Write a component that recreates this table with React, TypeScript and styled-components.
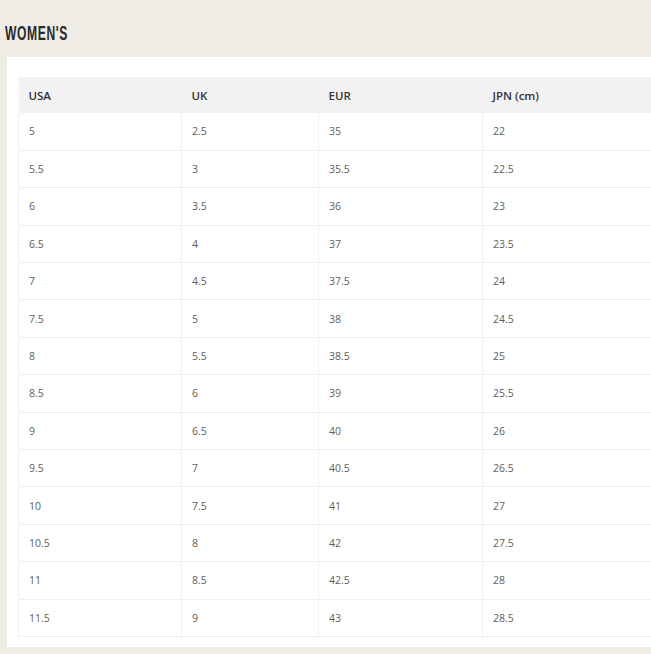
import styled, { createGlobalStyle } from 'styled-components';

const GlobalStyle = createGlobalStyle`
  html, body {
    margin: 0;
    padding: 0;
    background: #efece6;
    overflow: hidden;
  }
`;

const Page = styled.div`
  width: 651px;
  height: 654px;
  background: #efece6;
  overflow: hidden;
`;

const TitleBar = styled.div`
  height: 57px;
  padding: 0 0 0 5px;
  box-sizing: border-box;
  display: flex;
  align-items: flex-start;
`;

const Title = styled.h2`
  margin: 24px 0 0 0;
  display: inline-block;
  font-family: "Liberation Sans", Arial, sans-serif;
  font-weight: 700;
  font-size: 19.5px;
  line-height: 19px;
  color: #2a2a2a;
  transform: scaleX(0.62);
  transform-origin: left top;
  letter-spacing: 1px;
`;

const Panel = styled.div`
  margin-left: 7px;
  width: 720px;
  background: #fff;
  padding: 20px 0 10px 11px;
`;

const Table = styled.table`
  border-collapse: collapse;
  table-layout: fixed;
  width: 680px;
  font-family: "Open Sans", "Noto Sans", sans-serif;
`;

const HeadCell = styled.th<{ $w: number }>`
  width: ${p => p.$w}px;
  height: 36px;
  padding: 0 0 0 10px;
  background: #f2f2f2;
  text-align: left;
  font-size: 11.5px;
  font-weight: 600;
  color: #333;
`;

const Row = styled.tr`
  height: 37.4px;
  border-bottom: 1px solid #efefef;
`;

const Cell = styled.td`
  padding: 0 0 0 10px;
  font-size: 10.5px;
  color: #5e5e5e;
  border-left: 1px solid #efefef;
  border-right: 1px solid #efefef;
`;

const columns = [
  { label: 'USA', w: 153 },
  { label: 'UK', w: 127 },
  { label: 'EUR', w: 154 },
  { label: 'JPN (cm)', w: 206 },
];

const sizes = [
  ['5', '2.5', '35', '22'],
  ['5.5', '3', '35.5', '22.5'],
  ['6', '3.5', '36', '23'],
  ['6.5', '4', '37', '23.5'],
  ['7', '4.5', '37.5', '24'],
  ['7.5', '5', '38', '24.5'],
  ['8', '5.5', '38.5', '25'],
  ['8.5', '6', '39', '25.5'],
  ['9', '6.5', '40', '26'],
  ['9.5', '7', '40.5', '26.5'],
  ['10', '7.5', '41', '27'],
  ['10.5', '8', '42', '27.5'],
  ['11', '8.5', '42.5', '28'],
  ['11.5', '9', '43', '28.5'],
];

export default function App() {
  return (
    <>
      <GlobalStyle />
      <Page>
        <TitleBar>
          <Title>WOMEN'S</Title>
        </TitleBar>
        <Panel>
          <Table>
            <thead>
              <tr>
                {columns.map(c => (
                  <HeadCell key={c.label} $w={c.w}>{c.label}</HeadCell>
                ))}
              </tr>
            </thead>
            <tbody>
              {sizes.map(row => (
                <Row key={row[0]}>
                  {row.map((v, i) => (
                    <Cell key={i}>{v}</Cell>
                  ))}
                </Row>
              ))}
            </tbody>
          </Table>
        </Panel>
      </Page>
    </>
  );
}
